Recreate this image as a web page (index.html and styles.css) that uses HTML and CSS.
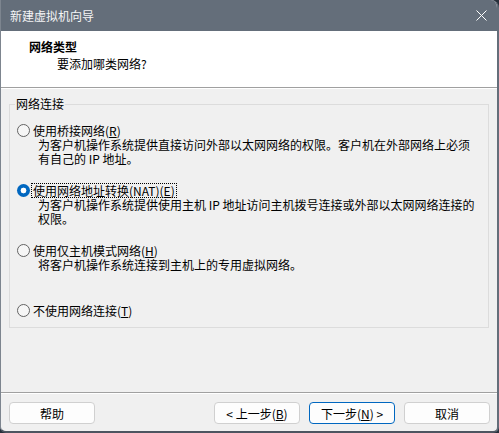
FILE: index.html
```html
<!DOCTYPE html>
<html lang="zh-CN">
<head>
  <meta charset="UTF-8">
  <title>新建虚拟机向导</title>
  <link rel="stylesheet" href="styles.css">
</head>
<body>
  <div class="window">
    <!-- Title Bar -->
    <div class="titlebar">
      <span class="title">新建虚拟机向导</span>
      <svg class="close" width="11" height="11" viewBox="0 0 11 11">
        <path d="M0.5 0.5 L10.5 10.5 M10.5 0.5 L0.5 10.5" stroke="#ffffff" stroke-width="1" fill="none"/>
      </svg>
    </div>

    <!-- Header -->
    <div class="header">
      <div class="header-title">网络类型</div>
      <div class="header-sub">要添加哪类网络?</div>
    </div>

    <!-- Options -->
    <div class="content">
      <fieldset class="group">
        <legend>网络连接</legend>

        <div class="option">
          <div class="radio-row"><span class="radio"></span><span class="label-text">使用桥接网络(<u>R</u>)</span></div>
          <p class="desc">为客户机操作系统提供直接访问外部以太网网络的权限。客户机在外部网络上必须<br>有自己的 IP 地址。</p>
        </div>

        <div class="option">
          <div class="radio-row"><span class="radio checked"></span><span class="label-text focused">使用网络地址转换(NAT)(<u>E</u>)</span></div>
          <p class="desc">为客户机操作系统提供使用主机 IP 地址访问主机拨号连接或外部以太网网络连接的<br>权限。</p>
        </div>

        <div class="option">
          <div class="radio-row"><span class="radio"></span><span class="label-text">使用仅主机模式网络(<u>H</u>)</span></div>
          <p class="desc">将客户机操作系统连接到主机上的专用虚拟网络。</p>
        </div>

        <div class="option last">
          <div class="radio-row"><span class="radio"></span><span class="label-text">不使用网络连接(<u>T</u>)</span></div>
        </div>
      </fieldset>
    </div>

    <!-- Buttons -->
    <div class="footer">
      <button class="btn">帮助</button>
      <button class="btn back">&lt; 上一步(<u>B</u>)</button>
      <button class="btn btn-default">下一步(<u>N</u>) &gt;</button>
      <button class="btn">取消</button>
    </div>
  </div>
</body>
</html>
```

FILE: styles.css
```css
/* General Styles */
body {
  margin: 0;
  padding: 0;
  background-color: #27303b;
  font-family: "Noto Sans CJK SC", "Noto Sans", sans-serif;
  font-size: 12px;
  color: #000000;
}

.window {
  width: 499px;
  height: 433px;
  box-sizing: border-box;
  display: flex;
  flex-direction: column;
  background-color: #f0f0f0;
  border-left: 1px solid #7d858f;
  border-right: 2px solid #646e7a;
  border-bottom: 2px solid #4d5560;
  border-radius: 0 8px 6px 6px;
  overflow: hidden;
}

/* Title Bar */
.titlebar {
  height: 31px;
  flex-shrink: 0;
  display: flex;
  align-items: center;
  justify-content: space-between;
  background-color: #646e7a;
  padding: 0 10px 0 9px;
}

.title {
  color: #f4f5f6;
  font-size: 12px;
  line-height: 16px;
}

.close {
  display: block;
  margin-top: -1px;
}

/* Header */
.header {
  height: 57px;
  flex-shrink: 0;
  box-sizing: border-box;
  background-color: #ffffff;
  border-bottom: 1px solid #a0a0a0;
  padding: 8px 0 0 28px;
}

.header-title {
  font-weight: bold;
  line-height: 16px;
}

.header-sub {
  line-height: 16px;
  margin-top: 1px;
  padding-left: 28px;
}

/* Group Box */
.content {
  flex: 1;
  border-top: 1px solid #ffffff;
}

.group {
  margin: 8px 8px 0 8px;
  padding: 11px 0 9px 7px;
  border: 1px solid #dcdcdc;
  border-radius: 0;
}

.group legend {
  margin-left: -2px;
  padding: 0 1px;
  line-height: 14px;
}

.option {
  height: 60px;
}

.option.last {
  height: 16px;
}

.radio-row {
  display: flex;
  align-items: center;
  height: 16px;
}

.radio {
  width: 13px;
  height: 13px;
  box-sizing: border-box;
  border-radius: 50%;
  border: 1px solid #626262;
  background-color: #f6f6f6;
  margin-right: 1px;
}

.radio.checked {
  border: none;
  background: radial-gradient(circle, #ffffff 0 2.6px, #0067c0 3.2px);
}

.label-text {
  line-height: 13px;
  padding: 0 1px;
  border: 1px solid transparent;
  white-space: nowrap;
}

.label-text.focused {
  border: 1px dotted #000000;
}

.desc {
  margin: 0;
  padding-left: 21px;
  line-height: 14px;
  white-space: nowrap;
}

/* Footer */
.footer {
  height: 39px;
  flex-shrink: 0;
  box-sizing: border-box;
  display: flex;
  align-items: flex-start;
  gap: 9px;
  border-top: 1px solid #a0a0a0;
  box-shadow: inset 0 1px #ffffff;
  padding: 9px 7px 0 8px;
}

.btn {
  width: 86px;
  height: 22px;
  box-sizing: border-box;
  padding: 0;
  font-family: "Noto Sans CJK SC", "Noto Sans", sans-serif;
  font-size: 12px;
  color: #000000;
  background-color: #fdfdfd;
  border: 1px solid #d0d0d0;
  border-radius: 4px;
}

.btn.back {
  margin-left: auto;
}

.btn-default {
  border-color: #0067c0;
}
```
